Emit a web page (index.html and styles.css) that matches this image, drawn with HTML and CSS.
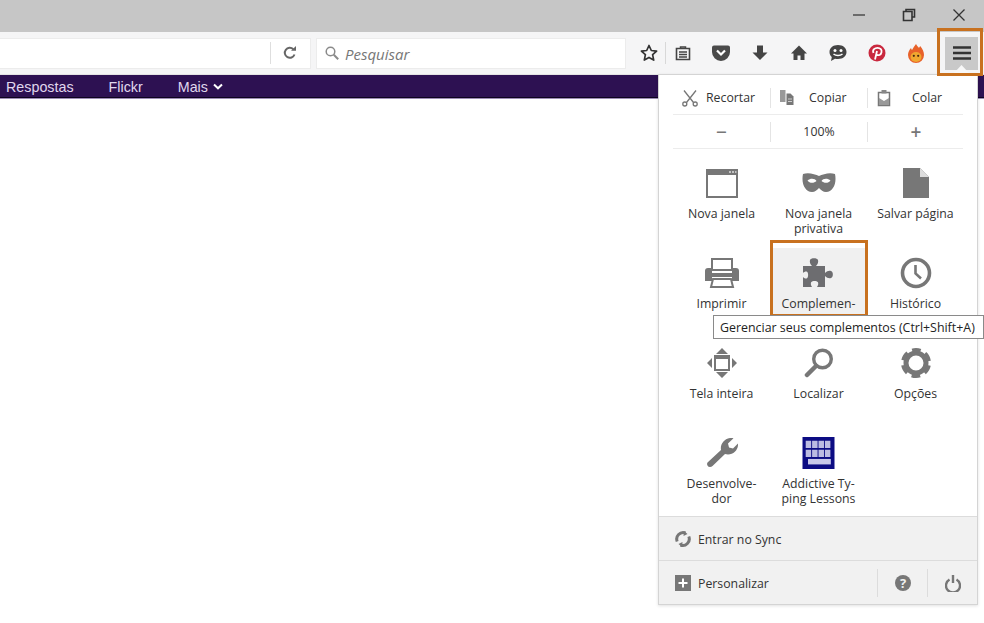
FILE: index.html
```html
<!DOCTYPE html>
<html lang="pt">
<head>
<meta charset="utf-8">
<title>Menu</title>
<link rel="stylesheet" href="styles.css">
</head>
<body>
<div class="titlebar">
  <svg class="win" width="14" height="14" viewBox="0 0 14 14"><path d="M1 7h12" stroke="#444" stroke-width="1.400"/></svg>
  <svg class="win" width="14" height="14" viewBox="0 0 14 14"><path d="M4 3V1.500h8.500V9H10M1.500 3.500h8.500V12.500H1.500z" fill="none" stroke="#333" stroke-width="1.600"/></svg>
  <svg class="win" width="14" height="14" viewBox="0 0 14 14"><path d="M1.500 1.500l11 11M12.500 1.500l-11 11" stroke="#333" stroke-width="1.300"/></svg>
</div>
<div class="toolbar">
  <div class="urlbar">
    <span class="urlsep"></span>
    <svg width="16" height="16" viewBox="0 0 16 16"><path d="M12.500 9.500A5 5 0 1 1 11.300 4.200" fill="none" stroke="#666" stroke-width="2"/><path d="M9 5.800h5V1z" fill="#666"/></svg>
  </div>
  <div class="searchbar">
    <svg width="16" height="16" viewBox="0 0 16 16"><circle cx="6.500" cy="6.500" r="4.300" fill="none" stroke="#8a8a8a" stroke-width="1.500"/><path d="M9.800 9.800l4.400 4.400" stroke="#8a8a8a" stroke-width="2"/></svg>
    <span class="placeholder">Pesquisar</span>
  </div>
  <div class="tools">
    <svg width="18" height="18" viewBox="0 0 18 18"><path d="M9 1.500l2.300 5 5.300.6-4 3.600 1.100 5.400L9 13.400l-4.700 2.700 1.100-5.400-4-3.600 5.300-.6z" fill="none" stroke="#333" stroke-width="1.700" stroke-linejoin="round"/></svg>
    <span class="toolsep"></span>
    <svg width="18" height="18" viewBox="0 0 18 18"><path d="M2.500 4.500h13v11h-13z" fill="none" stroke="#444" stroke-width="1.600"/><path d="M6.500 4.500v-1.500h5v1.500M5 8h8M5 10.500h8M5 13h8" fill="none" stroke="#444" stroke-width="1.500"/></svg>
    <svg class="t1" width="20" height="18" viewBox="0 0 20 18"><path d="M3 1.500h14a2 2 0 0 1 2 2V8a9 9 0 0 1-18 0V3.500a2 2 0 0 1 2-2z" fill="#4a4a4a"/><path d="M6 6.500l4 4 4-4" fill="none" stroke="#fff" stroke-width="2.200"/></svg>
    <svg class="t2" width="18" height="18" viewBox="0 0 18 18"><path d="M6 1.500h6v7h4.500L9 16 1.500 8.500H6z" fill="#444"/></svg>
    <svg class="t3" width="18" height="18" viewBox="0 0 18 18"><path d="M9 1.500L1 9.500h2.500V16h4v-4.500h3V16h4V9.500H17z" fill="#444"/></svg>
    <svg class="t4" width="20" height="18" viewBox="0 0 20 18"><path d="M10 1c5 0 8.500 2.800 8.500 7s-3.500 7-8.500 7c-1 0-2 0-3-.3L3 17l.8-4C2.300 11.700 1.500 10 1.500 8 1.500 3.800 5 1 10 1z" fill="#444"/><circle cx="7" cy="6.500" r="1.500" fill="#fff"/><circle cx="13" cy="6.500" r="1.500" fill="#fff"/><path d="M5.500 10c2.500 2 6.500 2 9 0" fill="none" stroke="#fff" stroke-width="1.500"/></svg>
    <svg class="t5" width="18" height="18" viewBox="0 0 18 18"><circle cx="9" cy="9" r="8.500" fill="#c9283e"/><path d="M7 15.500l2-8.500M5.500 9C4 5.500 7 3.800 9.500 3.800c3 0 4.500 2 4 4.500-.5 2.700-3.300 3.800-5 2" fill="none" stroke="#fff" stroke-width="1.800"/></svg>
    <svg class="t6" width="18" height="20" viewBox="0 0 18 20"><path d="M9 1c1 2 2 2.500 3 4 .5-1 1-1.500 1.200-2 2.500 3 3.800 6 3.800 9a8 8 0 0 1-16 0c0-3 1.300-5 3-7 .3 1 .6 1.500 1 2C6 5 7.500 3 9 1z" fill="#e8622a"/><ellipse cx="9" cy="14" rx="5.500" ry="5" fill="#f0a830"/><circle cx="6.800" cy="12.800" r="1.100" fill="#4a2a10"/><circle cx="11.200" cy="12.800" r="1.100" fill="#4a2a10"/></svg>
    <div class="menubtn">
      <svg width="18" height="14" viewBox="0 0 18 14"><path d="M0 1.500h18M0 7h18M0 12.500h18" stroke="#333" stroke-width="2.400"/></svg>
    </div>
  </div>
</div>
<nav class="nav">
  <a>Respostas</a>
  <a>Flickr</a>
  <a>Mais <svg width="10" height="7" viewBox="0 0 10 7"><path d="M1 1.500l4 3.800 4-3.800" fill="none" stroke="#fff" stroke-width="2"/></svg></a>
</nav>

<div class="panel">
  <div class="panel-main">
    <div class="editrow">
      <div class="edit edit-cut">
        <svg width="18" height="18" viewBox="0 0 18 18"><path d="M3 1.500l9.500 12M15 1.500L5.500 13.500" stroke="#777" stroke-width="1.300" fill="none"/><circle cx="3.800" cy="15" r="2" fill="none" stroke="#777" stroke-width="1.300"/><circle cx="14.200" cy="15" r="2" fill="none" stroke="#777" stroke-width="1.300"/></svg>
        <span>Recortar</span>
      </div>
      <div class="edit edit-copy">
        <svg width="16" height="16" viewBox="0 0 16 16"><path d="M1 0h5.500v12H1z" fill="#999"/><path d="M7.500 3.500h4l3 3V15h-7z" fill="#777"/><path d="M9 9h4M9 11.500h4" stroke="#ccc"/></svg>
        <span>Copiar</span>
      </div>
      <div class="edit edit-paste">
        <svg width="16" height="18" viewBox="0 0 16 18"><path d="M2.500 3.500h11v13h-11z" fill="none" stroke="#777" stroke-width="1.500"/><path d="M5.500 1h5v3.500h-5z" fill="#888"/><path d="M3 9l5 3 5-3v7H3z" fill="#999"/></svg>
        <span>Colar</span>
      </div>
    </div>
    <div class="zoomrow">
      <div class="zoomcell zoomsym">−</div>
      <div class="zoomcell">100%</div>
      <div class="zoomcell zoomsym">+</div>
    </div>
    <div class="grid">
      <div class="item">
        <svg class="icon" width="34" height="30" viewBox="0 0 34 30"><path d="M2 2h30v27H2z" fill="none" stroke="#777" stroke-width="2"/><path d="M1 1h32v6H1z" fill="#777"/><path d="M24 4h2M27 4h2M30 4h1.500" stroke="#ddd" stroke-width="1.500"/></svg>
        <span class="label">Nova janela</span>
      </div>
      <div class="item">
        <svg class="icon" width="34" height="30" viewBox="0 0 34 30"><path d="M1 6C6 4 13 6 17 8 21 6 28 4 33 6 35 15 31 24 24 24 21 24 19 22 17 20 15 22 13 24 10 24 3 24-1 15 1 6z" fill="#777"/><path d="M5.500 12.500c3-2.500 7.500-2 9 .5-2.500 2.500-7 2.500-9-.5zM28.500 12.500c-3-2.500-7.500-2-9 .5 2.500 2.500 7 2.500 9-.5z" fill="#fff"/></svg>
        <span class="label">Nova janela<br>privativa</span>
      </div>
      <div class="item">
        <svg class="icon" width="28" height="30" viewBox="0 0 28 30"><path d="M1 0h17l9 9v21H1z" fill="#777"/><path d="M18 0v9h9z" fill="#ddd"/></svg>
        <span class="label">Salvar página</span>
      </div>
      <div class="item">
        <svg class="icon" width="36" height="30" viewBox="0 0 36 30"><path d="M8 1h20v11H8z" fill="none" stroke="#777" stroke-width="2"/><path d="M4 10h4v5h20v-5h4a3 3 0 0 1 3 3v10h-7v-4H8v4H1V13a3 3 0 0 1 3-3z" fill="#777"/><path d="M9 21h18l2 8H7z" fill="#fff" stroke="#777" stroke-width="2"/></svg>
        <span class="label">Imprimir</span>
      </div>
      <div class="item item-active">
        <svg class="icon" width="34" height="32" viewBox="0 0 34 32"><path d="M1 9h9c-2-2-2.500-4-2-6 .7-2.500 7.300-2.500 8 0 .5 2 0 4-2 6h9v7c2-2 4-2.500 6-2 2.500.7 2.500 6.300 0 7-2 .5-4 0-6-2v11h-8c1.500-2 1.500-4 .8-5-1-1.500-5.500-1.500-6.500 0-.7 1-.7 3 .7 5H1V20c1.500 1.500 3 2 4 1.300 1.500-1 1.500-5.500 0-6.500-1-.7-2.500-.3-4 1.200z" fill="#6d6d70"/></svg>
        <span class="label">Complemen-</span>
      </div>
      <div class="item">
        <svg class="icon" width="32" height="32" viewBox="0 0 32 32"><circle cx="16" cy="16" r="13.500" fill="none" stroke="#777" stroke-width="3.600"/><path d="M15.500 8v8.500l5.500 5" fill="none" stroke="#777" stroke-width="2.600"/></svg>
        <span class="label">Histórico</span>
      </div>
      <div class="item">
        <svg class="icon" width="30" height="30" viewBox="0 0 30 30"><path d="M15 0l6 6H9zM15 30l-6-6h12zM0 15l5-5v10zM30 15l-5 5V10z" fill="#777"/><path d="M8 8h14v14H8z" fill="none" stroke="#777" stroke-width="2"/><path d="M8 8h14v3H8z" fill="#777"/></svg>
        <span class="label">Tela inteira</span>
      </div>
      <div class="item">
        <svg class="icon" width="30" height="30" viewBox="0 0 30 30"><circle cx="18.500" cy="11" r="8.800" fill="none" stroke="#777" stroke-width="3.400"/><path d="M12 18L3 27" stroke="#777" stroke-width="4.500" stroke-linecap="round"/></svg>
        <span class="label">Localizar</span>
      </div>
      <div class="item">
        <svg class="icon" width="30" height="30" viewBox="0 0 30 30"><circle cx="15" cy="15" r="10" fill="none" stroke="#777" stroke-width="5"/><circle class="gear" cx="15" cy="15" r="13" fill="none" stroke="#777" stroke-width="4"/></svg>
        <span class="label">Opções</span>
      </div>
      <div class="item">
        <svg class="icon" width="32" height="32" viewBox="0 0 32 32"><path d="M4 30a3 3 0 0 1-2.500-4.500L15 13c-1-5 2.500-11 9-12 1.500-.2 2.500 0 3.500.3L22 6.500l1 4 4 1 5-5c.5 6-4 11-10 11-1 0-2 0-3-.4L6.500 29c-.7.700-1.500 1-2.500 1z" fill="#777"/></svg>
        <span class="label">Desenvolve-<br>dor</span>
      </div>
      <div class="item">
        <svg class="icon" width="35" height="35" viewBox="0 0 35 35"><path d="M0 0h35v35H0z" fill="#0c0c83"/><path d="M3.500 4h6v8h-6zM10.500 4h6v8h-6zM17.500 4h6v8h-6zM24.500 4h6v8h-6zM3.500 14h6v8h-6zM10.500 14h6v8h-6zM17.500 14h6v8h-6zM24.500 14h6v8h-6z" fill="#bcbce2"/><path d="M6 24h25v6H6z" fill="#c8c8ea"/></svg>
        <span class="label">Addictive Ty-<br>ping Lessons</span>
      </div>
    </div>
  </div>
  <div class="footrow">
    <svg width="16" height="16" viewBox="0 0 16 16"><path d="M10.500 2A6.500 6.500 0 0 0 2.200 10.500M5.500 14A6.500 6.500 0 0 0 13.800 5.500" fill="none" stroke="#777" stroke-width="3"/><path d="M9 0l3.500 3-4 2zM7 16l-3.500-3 4-2z" fill="#777"/></svg>
    <span>Entrar no Sync</span>
  </div>
  <div class="footrow">
    <svg width="16" height="16" viewBox="0 0 16 16"><path d="M0 0h16v16H0z" fill="#777"/><path d="M8 3.500v9M3.500 8h9" stroke="#fff" stroke-width="2"/></svg>
    <span class="grow">Personalizar</span>
    <div class="footbtn"><svg width="16" height="16" viewBox="0 0 16 16"><circle cx="8" cy="8" r="8" fill="#777"/><text x="8" y="12.500" class="q">?</text></svg></div>
    <div class="footbtn"><svg width="16" height="18" viewBox="0 0 16 18"><path d="M4.500 5.500a7 7 0 1 0 7 0" fill="none" stroke="#777" stroke-width="2.400"/><path d="M8 1v8" stroke="#777" stroke-width="2.400"/></svg></div>
  </div>
</div>
<div class="arrow"></div>
<div class="mark mark-menu"></div>
<div class="mark mark-item"></div>
<div class="tooltip">Gerenciar seus complementos (Ctrl+Shift+A)</div>
</body>
</html>
```
FILE: styles.css
```css
* { box-sizing: border-box; }
html, body { margin: 0; height: 623px; overflow: hidden; background: #fff; }
body { font-family: "Open Sans", "Noto Sans", sans-serif; font-size: 12.300px; color: #333; position: relative; }

.titlebar { height: 32px; background: #c6c6c6; display: flex; justify-content: flex-end; align-items: center; gap: 36px; padding: 0 18px 2px 0; }
.win { display: block; }

.toolbar { height: 43px; background: #f5f5f6; display: flex; align-items: center; gap: 7px; border-bottom: 1px solid #e4e4e4; }
.urlbar, .searchbar { height: 29px; background: #fff; box-shadow: 0 0 0 1px #ececec; display: flex; align-items: center; flex: none; }
.urlbar { width: 310px; justify-content: flex-end; }
.urlsep { width: 1px; height: 22px; background: #dedede; margin-right: 11px; }
.urlbar svg { margin-right: 12px; }
.searchbar { width: 308px; padding-left: 7px; gap: 5px; }
.placeholder { font-style: italic; font-size: 15px; color: #777; padding-top: 1px; }
.tools { display: flex; align-items: center; margin-left: 8px; }
.toolsep { width: 1px; height: 22px; background: #d8d8d8; margin: 0 8px 0 7px; }
.t1 { margin-left: 19px; }
.t2 { margin-left: 20px; }
.t3 { margin-left: 21px; }
.t4 { margin-left: 20px; }
.t5 { margin-left: 20px; }
.t6 { margin-left: 21px; }
.menubtn { width: 33px; height: 33px; margin-left: 20px; background: #c9c9c9; display: flex; align-items: center; justify-content: center; flex: none; }

.nav { height: 23px; background: #2d1152; border-bottom: 1px solid #0e0320; box-shadow: 0 1px 0 #9c8cb4; display: flex; align-items: center; gap: 35px; padding: 1px 0 0 6px; color: #e0d8ee; font-family: "Liberation Sans", sans-serif; font-size: 14.300px; }
.nav a { display: flex; align-items: center; gap: 5px; }

.panel { position: absolute; left: 658px; top: 74px; width: 320px; height: 531px; background: #fff; border: 1px solid #d4d4d4; box-shadow: 0 1px 3px rgba(0,0,0,.12); display: flex; flex-direction: column; }
.panel-main { flex: 1; min-height: 0; padding: 0 14px; }
.editrow, .zoomrow { display: flex; border-bottom: 1px solid #ececec; align-items: center; }
.editrow { height: 40px; padding-top: 6px; }
.zoomrow { height: 34px; }
.edit, .zoomcell { flex: 0 0 97px; height: 20px; display: flex; align-items: center; justify-content: center; border-left: 1px solid #e4e4e4; }
.edit:first-child, .zoomcell:first-child { border-left: 0; }
.edit { justify-content: flex-start; padding-left: 8px; white-space: nowrap; }
.edit-cut { gap: 7px; }
.edit-copy { gap: 14px; }
.edit-paste { gap: 20px; }
.zoomsym { font-size: 19px; color: #777; font-weight: 600; }
.grid { display: grid; grid-template-columns: repeat(3, 97px); grid-template-rows: 90px 90px 90px 74px; margin-top: 18px; }
.item { display: flex; flex-direction: column; align-items: center; text-align: center; line-height: 15px; height: 74px; }
.icon { height: 32px; margin-bottom: 7px; flex: none; }
.item-active { background: #f0f0f0; margin-top: -9px; padding-top: 9px; }
.label { display: block; }
.gear { stroke-dasharray: 8.500 5.110; stroke-dashoffset: -2.550; }

.footrow { height: 44px; flex: none; background: #f1f1f1; border-top: 1px solid #dcdcdc; display: flex; align-items: center; padding: 1px 0 0 16px; }
.footrow > svg { margin-right: 7px; flex: none; }
.grow { flex: 1; }
.footbtn { width: 50px; height: 28px; flex: none; border-left: 1px solid #dcdcdc; display: flex; align-items: center; justify-content: center; }
.q { font-size: 13px; font-weight: 700; fill: #f1f1f1; text-anchor: middle; }

.arrow { position: absolute; left: 953px; top: 65px; width: 17px; height: 9px; background: #f8f8f8; clip-path: polygon(50% 0, 100% 100%, 0 100%); }
.mark { position: absolute; border: 3px solid #c8711f; }
.mark-menu { left: 937px; top: 28px; width: 46px; height: 48px; }
.mark-item { left: 770px; top: 240px; width: 98px; height: 77px; }
.tooltip { position: absolute; left: 713px; top: 315px; width: 271px; height: 24px; background: #fff; border: 1px solid #8a8a8a; display: flex; align-items: center; padding-left: 6px; font-size: 12.400px; color: #222; white-space: nowrap; }
```
